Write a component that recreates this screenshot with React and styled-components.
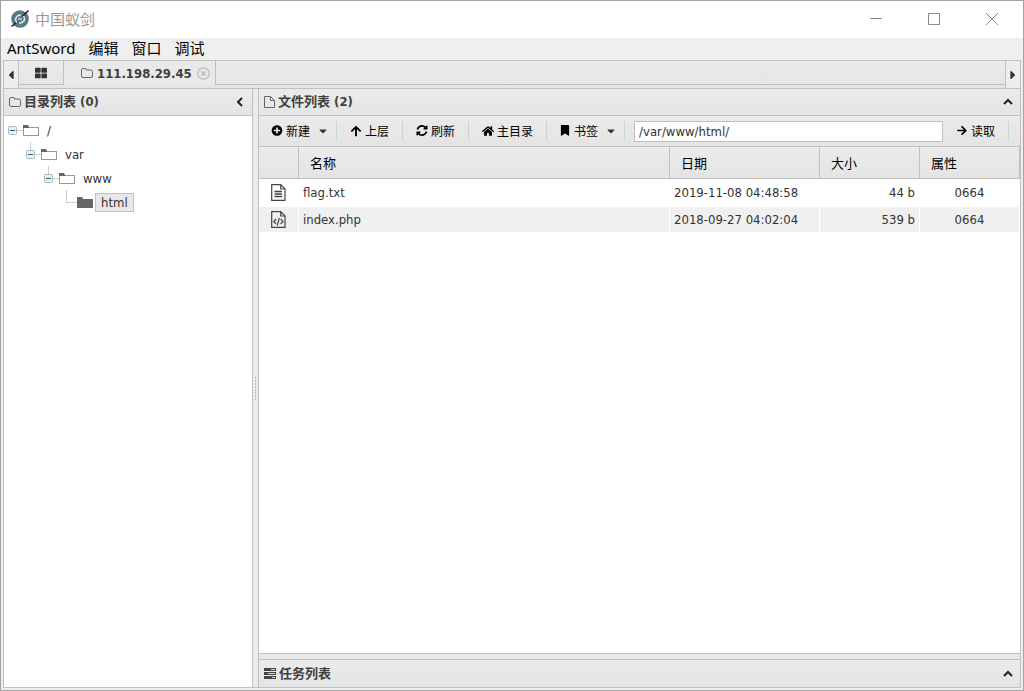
import React, { useState } from "react";
import styled, { createGlobalStyle } from "styled-components";
import {
  FaArrowRight,
  FaArrowUp,
  FaBookmark,
  FaCaretDown,
  FaCaretLeft,
  FaCaretRight,
  FaHome,
  FaPlusCircle,
  FaRegTimesCircle,
  FaThLarge,
} from "react-icons/fa";

const files = [
  { name: "flag.txt", type: "text", date: "2019-11-08 04:48:58", size: "44 b", attr: "0664" },
  { name: "index.php", type: "code", date: "2018-09-27 04:02:04", size: "539 b", attr: "0664" },
];

const tree = ["/", "var", "www", "html"];

const RefreshIcon = () => (
  <svg width="11" height="11" viewBox="0 128 1536 1536" fill="currentColor">
    <path d="M1511 1056q0 5-1 7-64 268-268 434.5T764 1664q-146 0-282.5-55T238 1452l-129 129q-19 19-45 19t-45-19-19-45v-448q0-26 19-45t45-19h448q26 0 45 19t19 45-19 45l-137 137q71 66 161 102t187 36q134 0 250-65t186-179q11-17 53-117 8-23 30-23h192q13 0 22.5 9.5t9.5 22.5zm25-800v448q0 26-19 45t-45 19h-448q-26 0-45-19t-19-45 19-45l138-138Q969 384 768 384q-134 0-250 65T332 628q-11 17-53 117-8 23-30 23H50q-13 0-22.5-9.5T18 736v-7q65-268 270-434.5T768 128q146 0 284 55.5T1297 340l130-129q19-19 45-19t45 19 19 45z" />
  </svg>
);

const TasksIcon = () => (
  <svg width="12" height="11" viewBox="0 0 12 11">
    <path fill="#444" d="M0 0h12v3H0zM0 4h12v3H0zM0 8h12v3H0z" />
    <path fill="#d8d8d8" d="M7 1h4v1H7zM4 5h7v1H4zM8 9h3v1H8z" />
  </svg>
);

const FolderOutline = () => (
  <svg width="12" height="11" viewBox="0 0 12 11" fill="none" stroke="#666">
    <path d="M.5 2Q.5.5 2 .5h2Q5.5.5 5.5 2H10q1.5 0 1.5 1.5V8q0 1.5-1.5 1.5H2Q.5 9.500.5 8z" />
  </svg>
);

const FileOutline = () => (
  <svg width="11" height="12" viewBox="0 0 11 12" fill="none" stroke="#666">
    <path d="M.5.5h6l4 4v7H.5z" />
    <path d="M6.5.5v4h4" />
  </svg>
);

const Logo = () => (
  <svg width="20" height="20" viewBox="0 0 20 20">
    <circle cx="10" cy="10" r="8.8" fill="#587886" />
    <path d="M1.5 17.5 8 12M12.5 7.5l6-6" stroke="#1c272e" strokeWidth="1.6" />
    <path
      d="M7 13.5C4 10 6.5 5.500 11 6M13.500 7c2.500 3.500 0 7.500-4.500 7"
      fill="none"
      stroke="#e2e9ec"
      strokeWidth="1.5"
    />
    <path d="M9 11V8.500M11 9v2.500" stroke="#d5dfe3" strokeWidth="1.2" />
  </svg>
);

const Chevron = ({ left }) => (
  <svg width="10" height="10" viewBox="0 0 10 10" fill="none" stroke="#222" strokeWidth="2">
    <path d={left ? "M7 1 3 5l4 4" : "M1 7l4-4 4 4"} />
  </svg>
);

const FileIcon = ({ type }) => (
  <svg width="15" height="17" viewBox="0 0 15 17" fill="none" stroke="#444" strokeWidth="1.2">
    <path d="M.7.7h9L14 5v11.300H.7z" />
    <path d="M9.700.7V5H14" />
    {type === "text" ? (
      <path d="M3.500 7.500h7.500M3.500 10h7.500M3.500 12.500h7.500" strokeWidth="1.4" />
    ) : (
      <path d="M5 8l-2.200 2.500L5 13M9.700 8l2.200 2.500L9.700 13M8.300 7l-2 7.500" />
    )}
  </svg>
);

const FolderIcon = ({ solid }) => (
  <svg width="16" height="13" viewBox="0 0 16 13">
    <path d="M0 1h5l1 2h10v9H0z" fill="#666" />
    {!solid && <path d="M1 4h14v7H1z" fill="#fff" />}
    {!solid && <path d="M6 3h10v1H6zM0 4h1v8H0zM15 4h1v8h-1zM0 11h16v1H0z" fill="#999" />}
  </svg>
);

const Minus = () => (
  <svg width="9" height="9" viewBox="0 0 9 9">
    <rect x=".5" y=".5" width="8" height="8" rx="1" fill="#e6f0f5" stroke="#a9b9c2" />
    <path d="M2 4.5h5" stroke="#3d5c6c" />
  </svg>
);

const App = () => {
  const [path, setPath] = useState("/var/www/html/");

  return (
    <>
      <GlobalStyle />
      <Window>
        <TitleBar>
          <Logo />
          <Title>中国蚁剑</Title>
          <WindowButton aria-label="最小化">
            <path d="M0 5.5h12" />
          </WindowButton>
          <WindowButton aria-label="最大化">
            <path d="M.5.5h11v11H.5z" />
          </WindowButton>
          <WindowButton aria-label="关闭">
            <path d="m0 0 12 12M12 0 0 12" />
          </WindowButton>
        </TitleBar>
        <MenuBar>
          <MenuItem>AntSword</MenuItem>
          <MenuItem>编辑</MenuItem>
          <MenuItem>窗口</MenuItem>
          <MenuItem>调试</MenuItem>
        </MenuBar>
        <Workspace>
          <TabBar>
            <ScrollButton aria-label="向左">
              <FaCaretLeft size={14} />
            </ScrollButton>
            <Tabs>
              <HomeTab aria-label="主页">
                <FaThLarge size={12} />
              </HomeTab>
              <ActiveTab>
                <FolderOutline />
                <TabLink href="#shell">111.198.29.45</TabLink>
                <CloseButton aria-label="关闭标签">
                  <FaRegTimesCircle size={13} />
                </CloseButton>
              </ActiveTab>
              <TabFiller />
            </Tabs>
            <ScrollButton $right aria-label="向右">
              <FaCaretRight size={14} />
            </ScrollButton>
          </TabBar>
          <Body>
            <Sidebar>
              <PanelHeader>
                <FolderOutline />
                <PanelTitle>目录列表 (0)</PanelTitle>
                <PlainButton aria-label="收起">
                  <Chevron left />
                </PlainButton>
              </PanelHeader>
              <Tree>
                {tree.map((name, i) => {
                  const last = i === tree.length - 1;
                  return (
                    <TreeRow key={name} $level={i}>
                      <TreeToggle $last={last} $root={i === 0}>
                        {!last && <Minus />}
                      </TreeToggle>
                      <FolderIcon solid={last} />
                      <TreeLabel $selected={last}>{name}</TreeLabel>
                    </TreeRow>
                  );
                })}
              </Tree>
            </Sidebar>
            <Splitter>
              <Grip />
            </Splitter>
            <Main>
              <FilePanel>
                <PanelHeader>
                  <FileOutline />
                  <PanelTitle>文件列表 (2)</PanelTitle>
                  <PlainButton aria-label="收起">
                    <Chevron />
                  </PlainButton>
                </PanelHeader>
                <Toolbar>
                  <ToolButton $menu>
                    <FaPlusCircle size={11} />
                    新建
                    <Arrow />
                  </ToolButton>
                  <ToolButton>
                    <FaArrowUp size={12} />
                    上层
                  </ToolButton>
                  <ToolButton>
                    <RefreshIcon />
                    刷新
                  </ToolButton>
                  <ToolButton>
                    <FaHome size={12} />
                    主目录
                  </ToolButton>
                  <ToolButton $menu>
                    <FaBookmark size={11} />
                    书签
                    <Arrow />
                  </ToolButton>
                  <PathInput
                    aria-label="路径"
                    value={path}
                    onChange={(e) => setPath(e.target.value)}
                  />
                  <ToolButton>
                    <FaArrowRight size={11} />
                    读取
                  </ToolButton>
                </Toolbar>
                <Table>
                  <colgroup>
                    <col width="40" />
                    <col />
                    <col width="150" />
                    <col width="100" />
                    <col width="100" />
                  </colgroup>
                  <thead>
                    <tr>
                      <HeadCell />
                      <HeadCell>名称</HeadCell>
                      <HeadCell>日期</HeadCell>
                      <HeadCell>大小</HeadCell>
                      <HeadCell>属性</HeadCell>
                    </tr>
                  </thead>
                  <tbody>
                    {files.map((file) => (
                      <FileRow key={file.name}>
                        <Cell $align="center">
                          <FileIcon type={file.type} />
                        </Cell>
                        <Cell>{file.name}</Cell>
                        <Cell>{file.date}</Cell>
                        <Cell $align="right">{file.size}</Cell>
                        <Cell $align="center">{file.attr}</Cell>
                      </FileRow>
                    ))}
                  </tbody>
                </Table>
              </FilePanel>
              <TaskPanel>
                <TasksIcon />
                <PanelTitle>任务列表</PanelTitle>
                <PlainButton aria-label="展开">
                  <Chevron />
                </PlainButton>
              </TaskPanel>
            </Main>
          </Body>
        </Workspace>
      </Window>
    </>
  );
};

const WindowButton = ({ children, ...props }) => (
  <CaptionButton {...props}>
    <svg width="12" height="12" viewBox="0 0 12 12" fill="none" stroke="#888">
      {children}
    </svg>
  </CaptionButton>
);

const Arrow = () => (
  <ArrowBox>
    <FaCaretDown size={12} />
  </ArrowBox>
);

const border = "1px solid #c0c0c0";
const gradient = "linear-gradient(#ebebeb, #e4e4e4)";

const GlobalStyle = createGlobalStyle`
  * {
    box-sizing: border-box;
  }
  body {
    margin: 0;
    color: #333;
    font-family: "DejaVu Sans Condensed", "Noto Sans", "Noto Sans CJK SC", sans-serif;
    font-size: 13px;
  }
  button {
    border: 0;
    padding: 0;
    background: none;
    color: inherit;
    font: inherit;
  }
  svg {
    display: block;
    flex: none;
  }
`;

const Window = styled.div`
  display: flex;
  flex-direction: column;
  height: 100vh;
  border: 1px solid #a3a3a3;
  background: #eee;
`;
const TitleBar = styled.header`
  display: flex;
  align-items: center;
  flex: none;
  height: 37px;
  padding: 0 2px 2px 9px;
  background: #fff;
`;
const Title = styled.div`
  flex: 1;
  margin-left: 5px;
  color: #999;
  font-family: "Noto Sans CJK SC", sans-serif;
  font-size: 15px;
`;
const CaptionButton = styled.button`
  display: flex;
  align-items: center;
  justify-content: center;
  width: 58px;
  height: 34px;
`;
const MenuBar = styled.nav`
  display: flex;
  align-items: center;
  flex: none;
  gap: 13px;
  height: 22px;
  padding: 0 6px 2px;
  background: #efefef;
`;
const MenuItem = styled.button`
  color: #000;
  font-family: "Noto Sans", "Noto Sans CJK SC", sans-serif;
  font-size: 15px;
  line-height: 20px;
`;
const Workspace = styled.div`
  display: flex;
  flex: 1;
  flex-direction: column;
  min-height: 0;
  margin: 0 2px 2px;
  border: ${border};
  background: #e8e8e8;
`;
const TabBar = styled.div`
  display: flex;
  flex: none;
  height: 28px;
  border-bottom: ${border};
  background: ${gradient};
`;
const ScrollButton = styled.button`
  display: flex;
  align-items: center;
  justify-content: center;
  width: 15px;
  border-left: ${(p) => (p.$right ? border : "0")};
  border-right: ${(p) => (p.$right ? "0" : border)};
  background: #ededed;
`;
const Tabs = styled.div`
  display: flex;
  flex: 1;
  height: 24px;
`;
const HomeTab = styled.button`
  display: flex;
  align-items: center;
  justify-content: center;
  width: 45px;
  border-right: ${border};
  border-bottom: ${border};
`;
const ActiveTab = styled.div`
  display: flex;
  align-items: center;
  width: 152px;
  padding: 0 5px 0 17px;
  border-right: ${border};
  background: #e9e9e9;
`;
const TabLink = styled.a`
  flex: 1;
  margin-left: 4px;
  color: #404040;
  font-weight: bold;
  text-decoration: none;
  white-space: nowrap;
`;
const CloseButton = styled.button`
  color: #bbb;
`;
const TabFiller = styled.div`
  flex: 1;
  border-bottom: ${border};
`;
const Body = styled.div`
  display: flex;
  flex: 1;
  min-height: 0;
`;
const Sidebar = styled.aside`
  flex: none;
  width: 249px;
  border-right: ${border};
  background: #fff;
`;
const PanelHeader = styled.div`
  display: flex;
  align-items: center;
  height: 27px;
  padding: 0 7px 0 5px;
  border-bottom: ${border};
  background: ${gradient};
`;
const PanelTitle = styled.h2`
  flex: 1;
  margin: 0 0 0 3px;
  color: #404040;
  font-size: 13px;
  line-height: 20px;
`;
const PlainButton = styled.button`
  display: flex;
`;
const Tree = styled.div`
  padding: 2px 0 0 4px;
`;
const TreeRow = styled.div`
  display: flex;
  align-items: center;
  height: 24px;
  padding-left: ${(p) => p.$level * 18}px;
`;
const TreeToggle = styled.div`
  display: flex;
  align-items: center;
  width: 15px;
  height: 24px;
  background:
    linear-gradient(#ccc, #ccc) ${(p) => (p.$last ? "4px 12px / 11px" : "9px 12px / 6px")} 1px no-repeat,
    linear-gradient(#ccc, #ccc) 4px 0 / 1px ${(p) => (p.$root ? 0 : 12)}px no-repeat;
`;
const TreeLabel = styled.span`
  margin-left: 2px;
  padding: 0 5px;
  border: 1px solid ${(p) => (p.$selected ? "#c0c0c0" : "transparent")};
  background: ${(p) => (p.$selected ? "#e8e8e8" : "none")};
  line-height: 17px;
`;
const Splitter = styled.div`
  display: flex;
  align-items: center;
  justify-content: center;
  flex: none;
  width: 5px;
  background: #ebebeb;
`;
const Grip = styled.div`
  width: 1px;
  height: 23px;
  background: repeating-linear-gradient(#bbb 0 2px, transparent 2px 3px);
`;
const Main = styled.main`
  display: flex;
  flex: 1;
  flex-direction: column;
  gap: 5px;
  min-width: 0;
  border-left: ${border};
`;
const FilePanel = styled.section`
  flex: 1;
  border-bottom: ${border};
  background: #fff;
`;
const Toolbar = styled.div`
  display: flex;
  align-items: center;
  height: 31px;
  padding-right: 11px;
  border-bottom: ${border};
  background: ${gradient};
`;
const ToolButton = styled.button`
  display: flex;
  align-items: center;
  gap: 3px;
  height: 20px;
  padding: 0 13px 1px ${(p) => (p.$menu ? 12 : 13)}px;
  border-right: 1px solid #c3d5dc;
  color: #000;
  font-size: 12px;
  white-space: nowrap;

  > svg {
    width: 12px;
  }
`;
const ArrowBox = styled.span`
  margin: 0 -6px 0 4px;
  color: #333;
`;
const PathInput = styled.input`
  flex: 1;
  min-width: 0;
  height: 21px;
  margin-left: 9px;
  padding: 0 4px;
  border: ${border};
  background: #fff;
  color: #333;
  font: inherit;
  outline: 0;
`;
const Table = styled.table`
  width: 100%;
  border-collapse: separate;
  border-spacing: 0;
  table-layout: fixed;
`;
const HeadCell = styled.th`
  height: 32px;
  padding: 0 11px;
  border-right: ${border};
  border-bottom: ${border};
  background: ${gradient};
  color: #000;
  font-weight: normal;
  text-align: left;
`;
const FileRow = styled.tr`
  &:nth-child(even) td {
    background: #f0f0f0;
  }
`;
const Cell = styled.td`
  height: 27px;
  padding: 0 4px;
  border: 1px solid #fff;
  border-left: 0;
  text-align: ${(p) => p.$align || "left"};
  white-space: nowrap;

  svg {
    margin: auto;
  }
`;
const TaskPanel = styled.section`
  display: flex;
  align-items: center;
  flex: none;
  height: 28px;
  padding: 0 7px 0 5px;
  border-top: ${border};
  background: ${gradient};
`;

export default App;
